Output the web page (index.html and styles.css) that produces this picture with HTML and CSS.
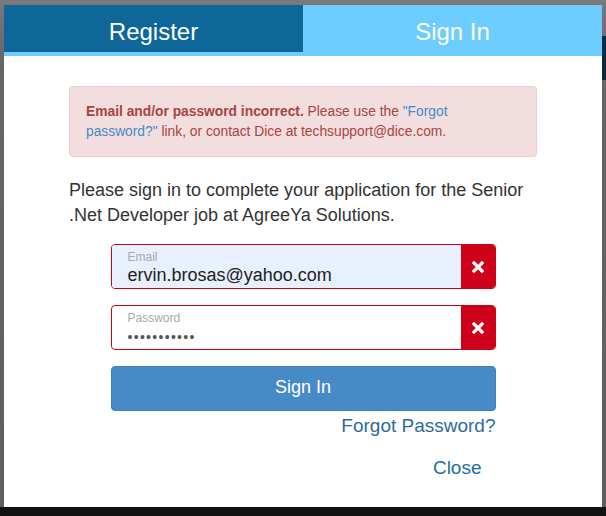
FILE: index.html
```html
<!DOCTYPE html>
<html>
<head>
<meta charset="utf-8">
<link rel="stylesheet" href="styles.css">
</head>
<body>
<div class="backdrop">
  <div class="page-strip"></div>
  <div class="modal">
    <div class="tabs">
      <div class="tab tab-register">Register</div>
      <div class="tab tab-signin">Sign In</div>
    </div>
    <div class="modal-body">
      <div class="alert">
        <strong>Email and/or password incorrect.</strong> Please use the <a class="alert-link" href="#">"Forgot password?"</a> link, or contact Dice at techsupport@dice.com.
      </div>
      <p class="intro">Please sign in to complete your application for the Senior .Net Developer job at AgreeYa Solutions.</p>
      <form class="form">
        <div class="field field-filled">
          <div class="field-main">
            <span class="field-label">Email</span>
            <span class="field-value">ervin.brosas@yahoo.com</span>
          </div>
          <span class="field-clear"><svg width="12" height="12" viewBox="0 0 12 12"><path d="M2 2L10 10M10 2L2 10" stroke="#fff" stroke-width="3.2" stroke-linecap="square"/></svg></span>
        </div>
        <div class="field">
          <div class="field-main">
            <span class="field-label">Password</span>
            <span class="field-value field-dots">•••••••••••</span>
          </div>
          <span class="field-clear"><svg width="12" height="12" viewBox="0 0 12 12"><path d="M2 2L10 10M10 2L2 10" stroke="#fff" stroke-width="3.2" stroke-linecap="square"/></svg></span>
        </div>
        <button class="btn-signin" type="button">Sign In</button>
        <div class="forgot"><a href="#">Forgot Password?</a></div>
        <div class="close-row"><a href="#">Close</a></div>
      </form>
    </div>
  </div>
  <div class="bottom-bar"></div>
</div>
</body>
</html>
```
FILE: styles.css
```css
html, body {
  margin: 0;
  padding: 0;
}
body {
  font-family: "Liberation Sans", Arial, sans-serif;
  background: #1a1a1a;
}
.backdrop {
  position: relative;
  width: 606px;
  height: 516px;
  background: linear-gradient(#7a7a7a, #666 60px, #5e5e5e);
  display: flex;
  flex-direction: column;
  overflow: hidden;
}
.page-strip {
  position: absolute;
  right: 0;
  top: 36px;
  width: 6px;
  height: 44px;
  background: #0b2a3d;
}
.modal {
  position: relative;
  margin: 5px 4px 0 4px;
  width: 598px;
  height: 502px;
  background: #fff;
  box-sizing: border-box;
}
.tabs {
  display: flex;
  height: 51px;
  background: #6dcdfe;
}
.tab {
  flex: 1;
  height: 47px;
  display: flex;
  align-items: center;
  justify-content: center;
  color: #fff;
  font-size: 24px;
  padding-top: 7px;
  box-sizing: border-box;
}
.tab-register {
  background: #0e6699;
}
.tab-signin {
  background: #6dcdfe;
}
.modal-body {
  padding: 30px 65px 0 65px;
}
.alert {
  background: #f2dede;
  border: 1px solid #ebccd1;
  border-radius: 4px;
  color: #a94442;
  font-size: 13.8px;
  line-height: 20px;
  padding: 15px 16px;
  height: 71px;
  box-sizing: border-box;
}
.alert strong {
  font-weight: bold;
}
.alert-link {
  color: #428bca;
  text-decoration: none;
}
.intro {
  margin: 21px 0 0 0;
  font-size: 18px;
  line-height: 25px;
  color: #333;
}
.form {
  width: 385px;
  margin: 16px auto 0 auto;
  display: flex;
  flex-direction: column;
}
.field {
  display: flex;
  height: 45px;
  border: 1px solid #cc0018;
  border-radius: 4px;
  box-sizing: border-box;
  margin-bottom: 16px;
  overflow: hidden;
  background: #fff;
}
.field-filled .field-main {
  background: #e8f0fe;
}
.field-main {
  flex: 1;
  display: flex;
  flex-direction: column;
  padding: 5px 0 0 16px;
}
.field-label {
  font-size: 12px;
  line-height: 14px;
  color: #a8a8a8;
}
.field-value {
  font-size: 18px;
  line-height: 22px;
  color: #222;
}
.field-dots {
  font-size: 14px;
  color: #555;
  letter-spacing: 1.3px;
  line-height: 24px;
}
.field-clear {
  width: 34px;
  background: #cf0019;
  display: flex;
  align-items: center;
  justify-content: center;
}
.btn-signin {
  height: 45px;
  border: 1px solid #3f80bd;
  border-radius: 4px;
  background: #468ac8;
  color: #fff;
  font-family: "Liberation Sans", Arial, sans-serif;
  font-size: 18px;
  padding: 0 0 2px 0;
}
.forgot {
  text-align: right;
  margin-top: 3px;
  font-size: 19px;
  line-height: 24px;
}
.forgot a, .close-row a {
  color: #2e6b9c;
  text-decoration: none;
}
.close-row {
  text-align: right;
  padding-right: 14px;
  margin-top: 18px;
  font-size: 19px;
  line-height: 24px;
}
.close-row a {
  color: #256ea3;
}
.bottom-bar {
  flex: 1;
  background: #121212;
}
```
